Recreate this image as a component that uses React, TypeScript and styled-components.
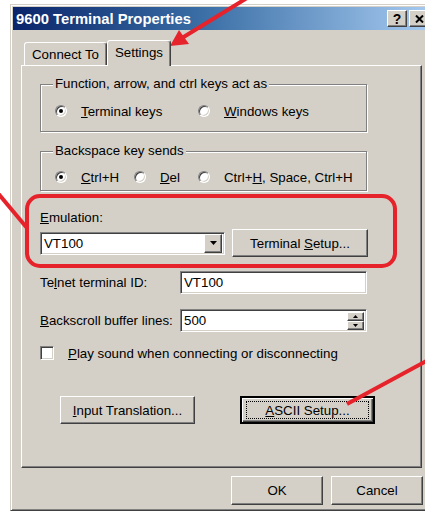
import styled, { createGlobalStyle, css } from "styled-components";

const GlobalStyle = createGlobalStyle`
  html, body {
    margin: 0;
    padding: 0;
    background: #fff;
    overflow: hidden;
  }
  body {
    font-family: "Liberation Sans", Arial, sans-serif;
    font-size: 13.3px;
    color: #000;
  }
`;

const raised = css`
  border: 1px solid;
  border-color: #fff #404040 #404040 #fff;
  box-shadow: inset -1px -1px #808080;
`;

const sunken = css`
  border: 1px solid;
  border-color: #808080 #fff #fff #808080;
  box-shadow: inset 1px 1px #404040, inset -1px -1px #d4d0c8;
`;

const Page = styled.div`
  position: relative;
  width: 425px;
  height: 515px;
  padding: 4px 0 0 10px;
  box-sizing: border-box;
  overflow: hidden;
`;

const Window = styled.div`
  width: 423px;
  background: #d4d0c8;
  border: 1px solid;
  border-color: #d4d0c8 #404040 #404040 #d4d0c8;
  box-shadow: inset 1px 1px #fff, inset -1px -1px #808080;
  padding: 2px 2px 5px;
  box-sizing: border-box;
`;

const TitleBar = styled.div`
  height: 23px;
  display: flex;
  align-items: center;
  padding: 0 1px 0 3px;
  gap: 2px;
  background: linear-gradient(to right, #0a246a 0%, #3a6ea5 45%, #a6caf0 100%);
`;

const Title = styled.div`
  flex: 1;
  color: #fff;
  font-weight: bold;
  font-size: 14.8px;
  white-space: nowrap;
`;

const CaptionButton = styled.div`
  ${raised};
  width: 20px;
  height: 17px;
  box-sizing: border-box;
  background: #d4d0c8;
  display: flex;
  align-items: center;
  justify-content: center;
  font-weight: bold;
  font-size: 14px;
  line-height: 1;
`;

const Body = styled.div`
  padding: 10px 8px 0;
`;

const TabRow = styled.div`
  position: relative;
  z-index: 1;
  display: flex;
  align-items: flex-end;
  height: 25px;
  padding-left: 3px;
`;

const Tab = styled.div<{ $active?: boolean; $width: number }>`
  width: ${(p) => p.$width}px;
  height: ${(p) => (p.$active ? 26 : 23)}px;
  margin-bottom: ${(p) => (p.$active ? -1 : 0)}px;
  box-sizing: border-box;
  background: #d4d0c8;
  border: 1px solid;
  border-bottom: none;
  border-color: #fff #404040 transparent #fff;
  border-radius: 3px 3px 0 0;
  box-shadow: inset -1px 0 #808080;
  display: flex;
  align-items: center;
  justify-content: center;
  padding-bottom: ${(p) => (p.$active ? 3 : 0)}px;
`;

const Panel = styled.div`
  ${raised};
  height: 403px;
  box-sizing: border-box;
  padding: 0 18px;
  display: flex;
  flex-direction: column;
  align-items: flex-start;
`;

const Group = styled.fieldset<{ $top: number; $pt: number; $pb: number }>`
  width: 327px;
  box-sizing: border-box;
  margin: ${(p) => p.$top}px 0 0;
  padding: ${(p) => p.$pt}px 0 ${(p) => p.$pb}px 14px;
  border: 1px solid #808080;
  box-shadow: inset 1px 1px #fff, 1px 1px #fff;
  display: flex;
`;

const Legend = styled.legend`
  margin-left: -2px;
  padding: 0 2px;
  line-height: 16px;
  background: #d4d0c8;
`;

const Option = styled.label<{ $width?: number }>`
  display: flex;
  align-items: center;
  height: 16px;
  width: ${(p) => (p.$width ? `${p.$width}px` : "auto")};
  gap: 14px;
`;

const RadioDot = styled.span<{ $checked?: boolean }>`
  ${sunken};
  position: relative;
  width: 12px;
  height: 12px;
  box-sizing: border-box;
  border-radius: 50%;
  background: #fff;
  flex: none;
  &::after {
    content: "";
    display: ${(p) => (p.$checked ? "block" : "none")};
    position: absolute;
    left: 3px;
    top: 3px;
    width: 4px;
    height: 4px;
    border-radius: 50%;
    background: #000;
  }
`;

const CheckBox = styled.span`
  ${sunken};
  width: 14px;
  height: 14px;
  box-sizing: border-box;
  background: #fff;
  flex: none;
`;

const Key = styled.span`
  text-decoration: underline;
`;

const Label = styled.div<{ $top: number; $width?: number }>`
  margin-top: ${(p) => p.$top}px;
  line-height: 16px;
  width: ${(p) => (p.$width ? `${p.$width}px` : "auto")};
  flex: none;
`;

const Row = styled.div<{ $top: number; $indent?: number; $gap?: number }>`
  margin-top: ${(p) => p.$top}px;
  margin-left: ${(p) => p.$indent ?? 0}px;
  display: flex;
  align-items: center;
  gap: ${(p) => p.$gap ?? 0}px;
`;

const Field = styled.div<{ $width: number }>`
  ${sunken};
  width: ${(p) => p.$width}px;
  height: 23px;
  box-sizing: border-box;
  background: #fff;
  display: flex;
  align-items: center;
  padding: 0 2px 0 3px;
`;

const FieldText = styled.span`
  flex: 1;
`;

const DropButton = styled.div`
  ${raised};
  width: 18px;
  height: 19px;
  box-sizing: border-box;
  background: #d4d0c8;
  display: flex;
  align-items: center;
  justify-content: center;
`;

const Spin = styled.div`
  display: flex;
  flex-direction: column;
`;

const SpinButton = styled.div`
  ${raised};
  width: 17px;
  height: 9px;
  box-sizing: border-box;
  background: #d4d0c8;
  display: flex;
  align-items: center;
  justify-content: center;
`;

const Button = styled.div<{ $width: number; $height?: number; $default?: boolean }>`
  ${raised};
  position: relative;
  width: ${(p) => p.$width}px;
  height: ${(p) => p.$height ?? 28}px;
  box-sizing: border-box;
  background: #d4d0c8;
  display: flex;
  align-items: center;
  justify-content: center;
  white-space: pre;
  flex: none;
  ${(p) =>
    p.$default &&
    css`
      border: 2px solid #000;
      box-shadow: inset 1px 1px #fff, inset -1px -1px #404040, inset -2px -2px #808080;
      &::after {
        content: "";
        position: absolute;
        inset: 3px 4px;
        border: 1px dotted #000;
      }
    `}
`;

const Footer = styled.div`
  display: flex;
  justify-content: flex-end;
  gap: 8px;
  margin: 8px -1px 0 0;
`;

const Overlay = styled.svg`
  position: absolute;
  left: 0;
  top: 0;
  pointer-events: none;
`;

const Down = ({ w = 7 }: { w?: number }) => (
  <svg width={w} height={Math.ceil(w / 2)} viewBox={`0 0 ${w} ${Math.ceil(w / 2)}`}>
    <polygon points={`0,0 ${w},0 ${w / 2},${Math.ceil(w / 2)}`} fill="#000" />
  </svg>
);

const Up = ({ w = 5 }: { w?: number }) => (
  <svg width={w} height={Math.ceil(w / 2)} viewBox={`0 0 ${w} ${Math.ceil(w / 2)}`}>
    <polygon points={`0,${Math.ceil(w / 2)} ${w},${Math.ceil(w / 2)} ${w / 2},0`} fill="#000" />
  </svg>
);

const red = "#e6222a";

export default function App() {
  return (
    <Page>
      <GlobalStyle />
      <Window>
        <TitleBar>
          <Title>9600 Terminal Properties</Title>
          <CaptionButton>?</CaptionButton>
          <CaptionButton>
            <svg width="9" height="8" viewBox="0 0 9 8">
              <path d="M1 0.5 L8 7.5 M8 0.5 L1 7.5" stroke="#000" strokeWidth="2" />
            </svg>
          </CaptionButton>
        </TitleBar>
        <Body>
          <TabRow>
            <Tab $width={83}>Connect To</Tab>
            <Tab $width={64} $active>
              Settings
            </Tab>
          </TabRow>
          <Panel>
            <Group $top={10} $pt={11} $pb={12}>
              <Legend>Function, arrow, and ctrl keys act as</Legend>
              <Option $width={143}>
                <RadioDot $checked />
                <span>
                  <Key>T</Key>erminal keys
                </span>
              </Option>
              <Option>
                <RadioDot />
                <span>
                  <Key>W</Key>indows keys
                </span>
              </Option>
            </Group>
            <Group $top={11} $pt={10} $pb={5}>
              <Legend>Backspace key sends</Legend>
              <Option $width={79}>
                <RadioDot $checked />
                <span>
                  <Key>C</Key>trl+H
                </span>
              </Option>
              <Option $width={64}>
                <RadioDot />
                <span>
                  <Key>D</Key>el
                </span>
              </Option>
              <Option>
                <RadioDot />
                <span>
                  Ctrl+<Key>H</Key>, Space, Ctrl+H
                </span>
              </Option>
            </Group>

            <Label $top={19}>
              <Key>E</Key>mulation:
            </Label>
            <Row $top={3} $gap={7}>
              <Field $width={185}>
                <FieldText>VT100</FieldText>
                <DropButton>
                  <Down />
                </DropButton>
              </Field>
              <Button $width={136}>
                <span>
                  Terminal <Key>S</Key>etup...
                </span>
              </Button>
            </Row>

            <Row $top={14}>
              <Label $top={0} $width={140}>
                Te<Key>l</Key>net terminal ID:
              </Label>
              <Field $width={187}>
                <FieldText>VT100</FieldText>
              </Field>
            </Row>

            <Row $top={15}>
              <Label $top={0} $width={140}>
                <Key>B</Key>ackscroll buffer lines:
              </Label>
              <Field $width={187}>
                <FieldText>500</FieldText>
                <Spin>
                  <SpinButton>
                    <Up />
                  </SpinButton>
                  <SpinButton>
                    <Down w={5} />
                  </SpinButton>
                </Spin>
              </Field>
            </Row>

            <Row $top={13}>
              <Option>
                <CheckBox />
                <span>
                  <Key>P</Key>lay sound when connecting or disconnecting
                </span>
              </Option>
            </Row>

            <Row $top={35} $indent={20} $gap={45}>
              <Button $width={135}>
                <span>
                  <Key>I</Key>nput Translation...
                </span>
              </Button>
              <Button $width={135} $default>
                <span>
                  <Key>A</Key>SCII Setup...
                </span>
              </Button>
            </Row>
          </Panel>
          <Footer>
            <Button $width={92} $height={29}>
              OK
            </Button>
            <Button $width={92} $height={29}>
              Cancel
            </Button>
          </Footer>
        </Body>
      </Window>

      <Overlay width="425" height="515" viewBox="0 0 425 515">
        <rect x="27" y="196" width="368" height="70" rx="13" fill="none" stroke={red} strokeWidth="4" />
        <line x1="-3" y1="192" x2="27" y2="228" stroke={red} strokeWidth="4" />
        <line x1="430" y1="359" x2="347" y2="404" stroke={red} strokeWidth="4" />
        <line x1="247" y1="-2" x2="182" y2="38" stroke={red} strokeWidth="4" />
        <polygon points="170,46 179,30 189,44" fill={red} />
      </Overlay>
    </Page>
  );
}
